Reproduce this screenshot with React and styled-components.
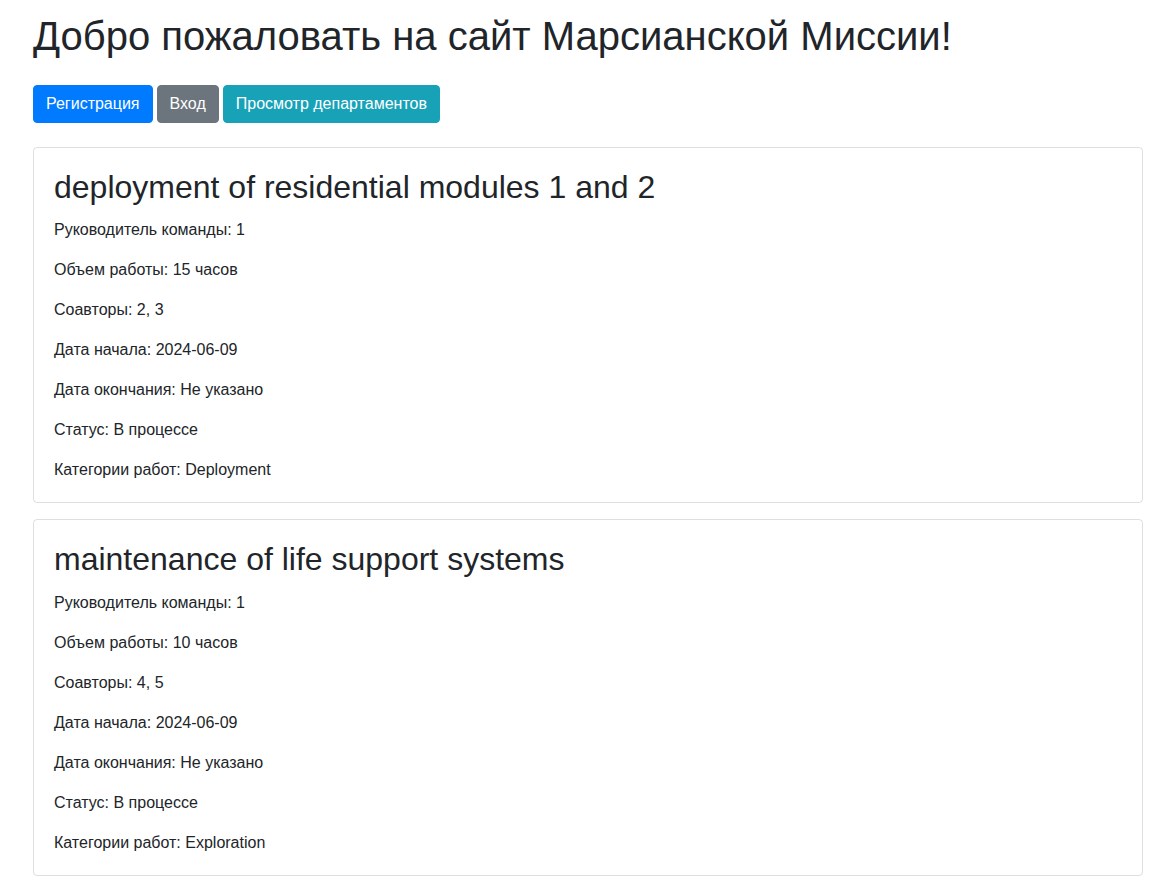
import styled, { createGlobalStyle } from 'styled-components';

const projects = [
  {
    title: 'deployment of residential modules 1 and 2',
    leader: 1,
    hours: 15,
    collaborators: '2, 3',
    start: '2024-06-09',
    end: 'Не указано',
    status: 'В процессе',
    categories: 'Deployment',
  },
  {
    title: 'maintenance of life support systems',
    leader: 1,
    hours: 10,
    collaborators: '4, 5',
    start: '2024-06-09',
    end: 'Не указано',
    status: 'В процессе',
    categories: 'Exploration',
  },
];

const GlobalStyle = createGlobalStyle`
*, *::before, *::after { box-sizing: border-box; }
body {
margin: 0;
background: #fff;
color: #212529;
font-family: "Liberation Sans", Arial, sans-serif;
font-size: 16px;
line-height: 1.5;
}
`;

const Page = styled.div`
padding: 12px 10px 16px 33px;
`;

const Heading = styled.h1`
margin: 0 0 8px;
font-size: 40px;
font-weight: 500;
line-height: 1.2;
`;

const Nav = styled.div`
display: flex;
gap: 4px;
margin: 25px 0 24px;
`;

const colors = {
  primary: '#007bff',
  secondary: '#6c757d',
  info: '#17a2b8',
};

const Button = styled.a`
display: inline-block;
padding: 6px 12px;
font-size: 16px;
line-height: 24px;
color: #fff;
background: ${props => colors[props.variant]};
border: 1px solid ${props => colors[props.variant]};
border-radius: 4px;
text-decoration: none;
cursor: pointer;
`;

const Card = styled.div`
border: 1px solid rgba(0,0,0,0.125);
border-radius: 4px;
padding: 20px;
margin-bottom: 16px;
`;

const CardTitle = styled.h2`
margin: 0 0 12px;
font-size: 32px;
font-weight: 500;
line-height: 1.2;
`;

const CardText = styled.p`
margin: 0 0 16px;
&:last-child { margin-bottom: 0; }
`;

export default function App() {
  return (
    <Page>
      <GlobalStyle />
      <Heading>Добро пожаловать на сайт Марсианской Миссии!</Heading>
      <Nav>
        <Button variant="primary">Регистрация</Button>
        <Button variant="secondary">Вход</Button>
        <Button variant="info">Просмотр департаментов</Button>
      </Nav>
      {projects.map((p, idx) => (
        <Card key={idx}>
          <CardTitle>{p.title}</CardTitle>
          <CardText>Руководитель команды: {p.leader}</CardText>
          <CardText>Объем работы: {p.hours} часов</CardText>
          <CardText>Соавторы: {p.collaborators}</CardText>
          <CardText>Дата начала: {p.start}</CardText>
          <CardText>Дата окончания: {p.end}</CardText>
          <CardText>Статус: {p.status}</CardText>
          <CardText>Категории работ: {p.categories}</CardText>
        </Card>
      ))}
    </Page>
  );
}
